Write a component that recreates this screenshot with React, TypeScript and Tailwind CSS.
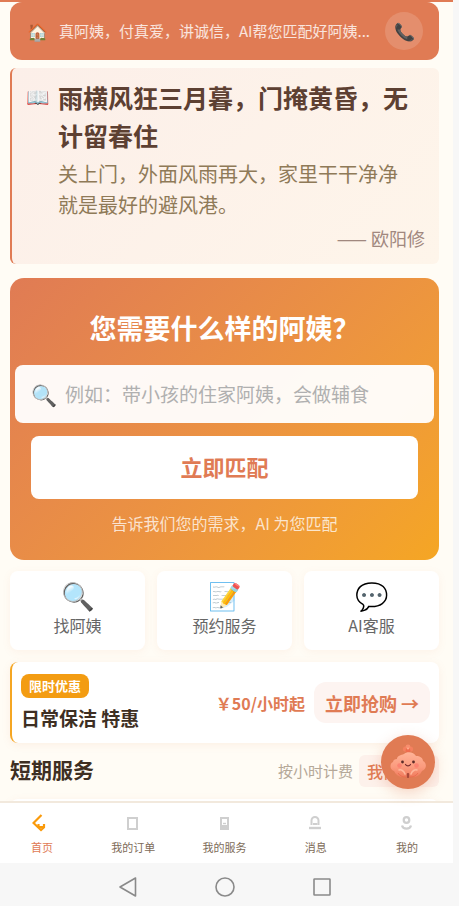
import React from 'react';

const quickActions = [
  { icon: '🔍', label: '找阿姨' },
  { icon: '📝', label: '预约服务' },
  { icon: '💬', label: 'AI客服' },
];

function HomeIcon() {
  return (
    <svg viewBox="0 0 20 20" className="w-5 h-5" fill="none" stroke="#fa9a0a" strokeWidth="2.2">
      <path d="M9.500 2 1.500 10l7.500 7 3-2.800V11" />
      <path d="M6.500 11v3h6" />
    </svg>
  );
}

function OrderIcon() {
  return (
    <svg viewBox="0 0 20 20" className="w-5 h-5" fill="none" stroke="#cfcfcf" strokeWidth="2">
      <rect x="5" y="5" width="9" height="11" />
    </svg>
  );
}

function ServiceIcon() {
  return (
    <svg viewBox="0 0 20 20" className="w-5 h-5" fill="none" stroke="#cfcfcf" strokeWidth="2">
      <rect x="6" y="5" width="7" height="11" />
      <path d="M6 12h7v4H6z" fill="#cfcfcf" stroke="none" />
      <path d="M8 10.500h3" strokeWidth="1.400" />
    </svg>
  );
}

function MessageIcon() {
  return (
    <svg viewBox="0 0 20 20" className="w-5 h-5" fill="none" stroke="#cfcfcf" strokeWidth="2">
      <path d="M5.500 12V7.500a3.500 3.500 0 0 1 7 0V12" />
      <path d="M3 15h12" strokeWidth="2.400" />
      <path d="M7 11h4.500" />
    </svg>
  );
}

function MineIcon() {
  return (
    <svg viewBox="0 0 20 20" className="w-5 h-5" fill="none" stroke="#cfcfcf" strokeWidth="2.200">
      <circle cx="9.500" cy="7" r="2.800" />
      <path d="M5 12.500c1 4.200 8 4.200 9 0" />
    </svg>
  );
}

const tabs = [
  { label: '首页', icon: <HomeIcon />, active: true },
  { label: '我的订单', icon: <OrderIcon />, active: false },
  { label: '我的服务', icon: <ServiceIcon />, active: false },
  { label: '消息', icon: <MessageIcon />, active: false },
  { label: '我的', icon: <MineIcon />, active: false },
];

function Mascot() {
  return (
    <svg viewBox="0 0 36 36" className="w-9 h-9">
      <defs>
        <linearGradient id="cloud" x1="0" y1="0" x2="0" y2="1">
          <stop offset="0" stopColor="#ffb498" />
          <stop offset="0.600" stopColor="#fb9a7d" />
          <stop offset="1" stopColor="#f07c5e" />
        </linearGradient>
      </defs>
      {/* flower */}
      <circle cx="15.500" cy="5" r="2.600" fill="#f4805f" />
      <circle cx="20.500" cy="5" r="2.600" fill="#f4805f" />
      <circle cx="18" cy="3" r="2.400" fill="#f88e6e" />
      <circle cx="18" cy="6.500" r="2.400" fill="#ee6c4e" />
      <circle cx="18" cy="4.500" r="1" fill="#ffb08f" />
      {/* body */}
      <path
        d="M7 15c0-3 4-4 7-5 3-3 10-2 12 2 4 0 7 2 7 5 4 2 4 8-1 10-2 4-5 6-9 6H13c-4 0-7-2-9-6-5-2-4-8-1-9 0-2 2-3 4-3z"
        fill="url(#cloud)"
      />
      {/* arms */}
      <path d="M9 26c2-1 5 1 6 4M27 26c-2-1-5 1-6 4" stroke="#ffb79c" strokeWidth="1.600" strokeLinecap="round" fill="none" />
      <path d="M8 29c2 3 5 4 8 4M28 29c-2 3-5 4-8 4" stroke="#e8694b" strokeWidth="0.800" fill="none" />
      <rect x="16.800" y="29" width="2.400" height="5" rx="1" fill="#a8493a" />
      {/* face */}
      <circle cx="12.500" cy="18" r="1.400" fill="#5b2b28" />
      <circle cx="23.500" cy="18" r="1.400" fill="#5b2b28" />
      <path d="M15.500 20.500c1 1.800 4 1.800 5 0" stroke="#7b3030" strokeWidth="1.200" strokeLinecap="round" fill="none" />
      <circle cx="9.500" cy="21.500" r="2.300" fill="#fb7568" opacity="0.650" />
      <circle cx="26.500" cy="21.500" r="2.300" fill="#fb7568" opacity="0.650" />
    </svg>
  );
}

export default function App() {
  return (
    <div className="relative h-screen flex flex-col bg-[#f7f7f7] font-['Noto_Sans_CJK_SC',sans-serif]">
      <main className="flex-1 min-h-0 overflow-hidden mr-1.5 pl-2.5 pr-3.5 bg-[#fffcf5]">
        <div className="h-0.5 -ml-2.5 -mr-3.5 bg-[#e07b54]" />

        <header className="flex items-center h-[58px] pl-[17px] pr-4 rounded-xl bg-[#e07b54]">
          <span className="w-8 text-[17px] leading-6">🏠</span>
          <p className="flex-1 truncate text-[15px] leading-6 text-white/80">真阿姨，付真爱，讲诚信，AI帮您匹配好阿姨...</p>
          <button aria-label="电话" className="w-[38px] h-[38px] rounded-full bg-white/15 text-[17px] leading-6">
            📞
          </button>
        </header>

        <section className="flex mt-2 pt-2.5 pb-3.5 pl-3.5 pr-3.5 rounded-md border-l-2 border-[#e07b54] bg-linear-135 from-[#fcefe9] to-[#fef5ea]">
          <span className="w-8 pt-1.5 text-[19px] leading-6">📖</span>
          <div className="flex-1">
            <h2 className="text-[25px] leading-[38px] font-bold text-[#5d4032]">雨横风狂三月暮，门掩黄昏，无计留春住</h2>
            <p className="mt-1 text-[20px] leading-[31px] text-[#8f7a58]">
              关上门，外面风雨再大，家里干干净净
              <br />
              就是最好的避风港。
            </p>
            <p className="mt-1.5 text-lg leading-6 text-right text-[#a1887f]">—— 欧阳修</p>
          </div>
        </section>

        <section className="mt-3.5 pt-8 pb-6 px-[5px] rounded-[14px] bg-linear-135 from-[#e07b54] to-[#f5a623]">
          <h1 className="text-[27px] leading-9 font-bold text-center text-white">您需要什么样的阿姨？</h1>
          <label className="flex items-center h-[58px] mt-[19px] px-4 rounded-lg bg-white/95">
            <span className="w-[34px] text-[21px] leading-8">🔍</span>
            <input
              type="text"
              aria-label="需求"
              placeholder="例如：带小孩的住家阿姨，会做辅食"
              className="flex-1 min-w-0 text-[19px] leading-8 bg-transparent outline-none placeholder:text-[#b0b0b0]"
            />
          </label>
          <div className="mt-[13px] px-4">
            <button className="w-full h-[63px] pb-0.5 rounded-lg bg-white text-[22px] font-bold text-[#e07b54]">立即匹配</button>
          </div>
          <p className="mt-3 mb-px text-base leading-6 text-center text-white/75">告诉我们您的需求，AI 为您匹配</p>
        </section>

        <section className="grid grid-cols-3 gap-3 mt-[11px]">
          {quickActions.map((item) => (
            <button
              key={item.label}
              className="flex flex-col items-center h-[79px] pt-1.5 rounded-lg bg-white text-[#666] shadow-[0_2px_8px_rgba(224,123,84,0.08)]"
            >
              <span className="text-[27px] leading-9">{item.icon}</span>
              <span className="text-base leading-6">{item.label}</span>
            </button>
          ))}
        </section>

        <section className="flex items-center h-[81px] mt-3 pl-[9px] pr-[9px] rounded-lg border-l-2 border-[#f5a623] bg-white shadow-[0_2px_8px_rgba(224,123,84,0.1)]">
          <div className="flex flex-col flex-1 items-start">
            <span className="h-6 px-2 rounded-lg bg-[#f39c12] text-[13px] leading-6 font-bold text-white">限时优惠</span>
            <h3 className="mt-1.5 text-[19px] leading-7 font-bold text-[#3e2f23]">日常保洁 特惠</h3>
          </div>
          <span className="mr-[9px] text-base font-bold text-[#e07b54]">￥50/小时起</span>
          <button className="h-[41px] px-[11px] rounded-xl bg-[#fdf4f1] text-lg font-bold text-[#e07b54]">立即抢购 →</button>
        </section>

        <section className="flex items-start mt-3">
          <h2 className="flex-1 text-[21px] leading-7 font-bold text-[#3e2f23]">短期服务</h2>
          <span className="mr-1.5 text-[15px] leading-8 text-[#b5a898]">按小时计费</span>
          <button className="w-20 h-8 px-2 rounded-md bg-[#fdf1eb] text-base text-left font-medium text-[#e07b54]">我们</button>
        </section>

        <section className="h-20 mt-3 rounded-lg bg-white shadow-[0_2px_8px_rgba(224,123,84,0.1)]" />
      </main>

      <nav className="flex justify-between h-[62px] mr-1.5 pl-2.5 pr-3.5 pt-2.5 border-t-2 border-[#f2e9dd] bg-white">
        {tabs.map((tab) => (
          <a
            key={tab.label}
            href="#"
            className={`flex flex-col items-center w-16 text-[11px] leading-4 ${tab.active ? 'text-[#e07b54]' : 'text-[#7d6b58]'}`}
          >
            {tab.icon}
            <span className="mt-1.5">{tab.label}</span>
          </a>
        ))}
      </nav>

      <footer className="flex items-center justify-center gap-[77px] h-[43px] pr-2.5 pt-1">
        <button aria-label="返回">
          <svg viewBox="0 0 20 20" className="w-5 h-5" fill="none" stroke="#8a8a8a" strokeWidth="1.6" strokeLinejoin="round">
            <path d="M17.500 1v18L2 10z" />
          </svg>
        </button>
        <button aria-label="主页">
          <svg viewBox="0 0 20 20" className="w-5 h-5" fill="none" stroke="#8a8a8a" strokeWidth="1.6">
            <circle cx="10" cy="10" r="9" />
          </svg>
        </button>
        <button aria-label="最近任务">
          <svg viewBox="0 0 20 20" className="w-5 h-5" fill="none" stroke="#8a8a8a" strokeWidth="1.6">
            <rect x="2" y="2" width="16" height="16" rx="0.500" />
          </svg>
        </button>
      </footer>

      <button
        aria-label="AI助手"
        className="absolute right-6 bottom-[117px] flex items-center justify-center w-[54px] h-[54px] rounded-full bg-[#e07b54] shadow-[0_4px_14px_rgba(224,123,84,0.3)]"
      >
        <Mascot />
      </button>
    </div>
  );
}
